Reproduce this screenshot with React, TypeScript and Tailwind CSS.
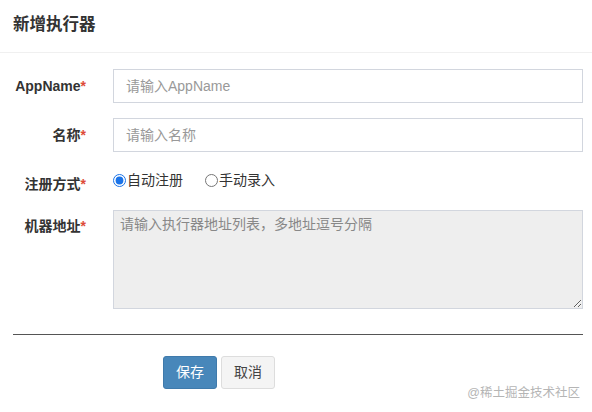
import React from "react";

const font = "font-['Liberation_Sans','Noto_Sans_CJK_SC',sans-serif]";

const Label = ({ text }: { text: string }) => (
  <label className="block w-[73px] shrink-0 text-right text-[14px] font-bold text-[#333] whitespace-nowrap">
    {text}
    <span className="text-[#dd4b39]">*</span>
  </label>
);

const App = () => {
  return (
    <div className={`${font} w-[592px] h-[412px] bg-white relative`}>
      <div className="h-[53px] flex items-center px-[13px] border-b border-[#f0f0f0]">
        <h3 className="text-[16.5px] font-bold text-[#333] -mt-[3px]">新增执行器</h3>
      </div>

      <form className="pl-[13px] pr-[9px] pt-[16px]">
        <div className="flex items-center h-[34px]">
          <Label text="AppName" />
          <input
            className="ml-[27px] flex-1 h-[34px] border border-[#d2d6de] px-[12px] text-[14px] text-[#555] placeholder:text-[#999] outline-none"
            placeholder="请输入AppName"
          />
        </div>

        <div className="flex items-center h-[34px] mt-[15px]">
          <Label text="名称" />
          <input
            className="ml-[27px] flex-1 h-[34px] border border-[#d2d6de] px-[12px] text-[14px] text-[#555] placeholder:text-[#999] outline-none"
            placeholder="请输入名称"
          />
        </div>

        <div className="flex items-start h-[26px] mt-[15px]">
          <div className="w-[73px] shrink-0 pt-[7px]">
            <Label text="注册方式" />
          </div>
          <div className="ml-[27px] flex items-center text-[14px] text-[#333] pt-[3px]">
            <label className="flex items-center">
              <input type="radio" name="type" defaultChecked className="m-0 w-[13px] h-[13px] accent-[#1a73e8]" />
              <span className="ml-[1px]">自动注册</span>
            </label>
            <label className="flex items-center ml-[22px]">
              <input type="radio" name="type" className="m-0 w-[13px] h-[13px]" />
              <span className="ml-[1px]">手动录入</span>
            </label>
          </div>
        </div>

        <div className="flex items-start mt-[17px]">
          <div className="w-[73px] shrink-0 pt-[6px]">
            <Label text="机器地址" />
          </div>
          <textarea
            readOnly
            className="ml-[27px] flex-1 h-[99px] border border-[#d2d6de] bg-[#eee] px-[6px] py-[3px] text-[14px] text-[#555] placeholder:text-[#888] outline-none"
            placeholder="请输入执行器地址列表，多地址逗号分隔"
          />
        </div>

        <div className="mt-[25px] border-t border-[#555]" />

        <div className="flex mt-[21px] pl-[150px] gap-[4px]">
          <button
            type="button"
            className="w-[54px] h-[33px] rounded-[3px] bg-[#4887ba] border border-[#3f7aab] text-white text-[14px]"
          >
            保存
          </button>
          <button
            type="button"
            className="w-[54px] h-[33px] rounded-[3px] bg-[#f4f4f4] border border-[#ddd] text-[#444] text-[14px]"
          >
            取消
          </button>
        </div>
      </form>

      <div className="absolute right-[12px] top-[384px] text-[12.5px] text-[#b5b5b5]">
        @稀土掘金技术社区
      </div>
    </div>
  );
};

export default App;
